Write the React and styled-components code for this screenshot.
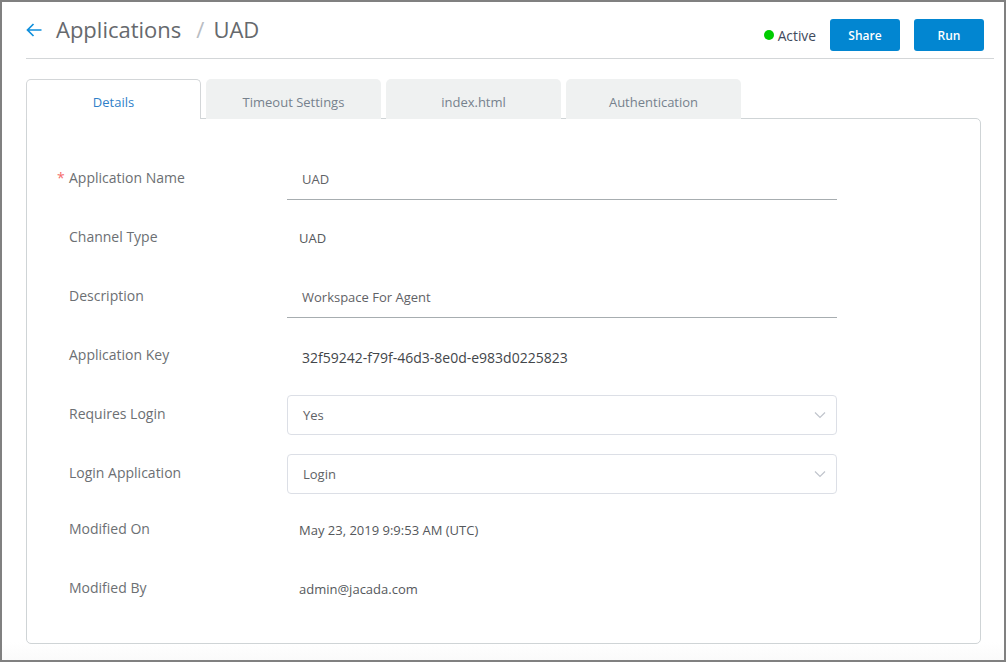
import React from "react";
import styled, { createGlobalStyle } from "styled-components";

/* ================= STYLES ================= */

const GlobalStyle = createGlobalStyle`
  html, body {
    margin: 0;
    padding: 0;
    background: #fff;
  }

  * {
    box-sizing: border-box;
  }
`;

const Frame = styled.div`
  width: 1006px;
  height: 662px;
  border: 2px solid #808080;
  background: linear-gradient(#fff 640px, #fafafa 660px);
  padding: 0 10px 0 24px;
  font-family: "Open Sans", "Liberation Sans", sans-serif;
  overflow: hidden;
`;

const Header = styled.header`
  display: flex;
  align-items: center;
  height: 57px;
  border-bottom: 1px solid #d3d6d8;
`;

const BackArrow = styled.svg`
  width: 16px;
  height: 14px;
  margin: 0 14px 0 0;
  stroke: #0f8fdc;
  stroke-width: 1.7;
  fill: none;
`;

const Crumb = styled.h1`
  margin: -2px 0 0;
  font-size: 22px;
  font-weight: 400;
  color: #66696d;
  line-height: 30px;
`;

const Slash = styled.span`
  margin: 0 9px 0 15px;
  color: #b9bdc3;
`;

const Actions = styled.div`
  display: flex;
  align-items: center;
  margin-left: auto;
  margin-right: 10px;
  margin-top: 10px;
`;

const Status = styled.span`
  display: flex;
  align-items: center;
  margin-right: 14px;
  font-size: 13.8px;
  color: #3f4a5c;
`;

const Dot = styled.i`
  width: 10px;
  height: 10px;
  margin-right: 4px;
  border-radius: 50%;
  background: #00cc00;
`;

const Button = styled.button`
  width: 70px;
  height: 32px;
  margin-left: ${(p) => (p.$spaced ? "14px" : "0")};
  border: 0;
  border-radius: 3px;
  background: #0286d1;
  color: #fff;
  font-family: inherit;
  font-size: 12px;
  font-weight: 600;
`;

const Tabs = styled.div`
  display: flex;
  gap: 5px;
  margin-top: 20px;
  position: relative;
  z-index: 1;
  height: 40px;
`;

const Tab = styled.div`
  display: flex;
  align-items: center;
  justify-content: center;
  width: 175px;
  height: 40px;
  padding-top: 5px;
  border-radius: 5px 5px 0 0;
  font-size: 13px;
  background: ${(p) => (p.$active ? "#fff" : "#eff1f1")};
  color: ${(p) => (p.$active ? "#2f7fc9" : "#76818d")};
  border: ${(p) => (p.$active ? "1px solid #d3d6d8" : "0")};
  border-bottom: 0;
`;

const Panel = styled.section`
  width: 955px;
  height: 526px;
  margin-top: -1px;
  padding-top: 41px;
  border: 1px solid #cfd4d6;
  border-radius: 0 5px 5px 5px;
  background: #fff;
`;

const Row = styled.div`
  display: grid;
  grid-template-columns: 260px 550px;
  height: 40px;
  margin-bottom: ${(p) => p.$gap ?? 19}px;
`;

const Label = styled.label`
  position: relative;
  padding: ${(p) => p.$top ?? 8}px 0 0 42px;
  font-size: 14px;
  line-height: 20px;
  color: #6c6f73;
`;

const Required = styled.span`
  position: absolute;
  left: 30px;
  top: 8px;
  color: #f56c6c;
`;

const TextValue = styled.div`
  height: 40px;
  padding: 9px 0 0 15px;
  font-size: 13px;
  line-height: 20px;
  color: #5f6266;
  border-bottom: ${(p) => (p.$underline ? "1px solid #a7adb0" : "0")};
`;

const KeyValue = styled.div`
  padding: 11px 0 0 15px;
  font-size: 14px;
  line-height: 20px;
  color: #43464a;
`;

const PlainValue = styled.div`
  padding: 9px 0 0 12px;
  font-size: 13px;
  line-height: 20px;
  color: #55585c;
`;

const Select = styled.div`
  display: flex;
  align-items: center;
  justify-content: space-between;
  height: 40px;
  padding: 0 16px 1px 15px;
  border: 1px solid #dcdfe6;
  border-radius: 4px;
  font-size: 13px;
  color: #606266;
`;

const Chevron = styled.svg`
  width: 12px;
  height: 8px;
  margin: 1px -6px 0 0;
  stroke: #c0c4cc;
  stroke-width: 1.2;
  fill: none;
`;

/* ================= COMPONENT ================= */

function SelectField({ value }) {
  return (
    <Select>
      {value}
      <Chevron viewBox="0 0 12 8">
        <path d="M1 1.5l5 5 5-5" />
      </Chevron>
    </Select>
  );
}

function App() {
  return (
    <>
      <GlobalStyle />
      <Frame>
        <Header>
          <BackArrow viewBox="0 0 16 14">
            <path d="M15.5 7H1.5M7.5 1L1.5 7l6 6" />
          </BackArrow>
          <Crumb>
            Applications
            <Slash>/</Slash>
            UAD
          </Crumb>
          <Actions>
            <Status>
              <Dot />
              Active
            </Status>
            <Button>Share</Button>
            <Button $spaced>Run</Button>
          </Actions>
        </Header>

        <Tabs>
          <Tab $active>Details</Tab>
          <Tab>Timeout Settings</Tab>
          <Tab>index.html</Tab>
          <Tab>Authentication</Tab>
        </Tabs>

        <Panel>
          <Row>
            <Label>
              <Required>*</Required>
              Application Name
            </Label>
            <TextValue $underline>UAD</TextValue>
          </Row>
          <Row>
            <Label>Channel Type</Label>
            <PlainValue>UAD</PlainValue>
          </Row>
          <Row>
            <Label>Description</Label>
            <TextValue $underline>Workspace For Agent</TextValue>
          </Row>
          <Row $gap={18}>
            <Label>Application Key</Label>
            <KeyValue>32f59242-f79f-46d3-8e0d-e983d0225823</KeyValue>
          </Row>
          <Row>
            <Label $top={9}>Requires Login</Label>
            <SelectField value="Yes" />
          </Row>
          <Row $gap={17}>
            <Label $top={9}>Login Application</Label>
            <SelectField value="Login" />
          </Row>
          <Row>
            <Label>Modified On</Label>
            <PlainValue>May 23, 2019 9:9:53 AM (UTC)</PlainValue>
          </Row>
          <Row>
            <Label>Modified By</Label>
            <PlainValue>admin@jacada.com</PlainValue>
          </Row>
        </Panel>
      </Frame>
    </>
  );
}

export default App;
